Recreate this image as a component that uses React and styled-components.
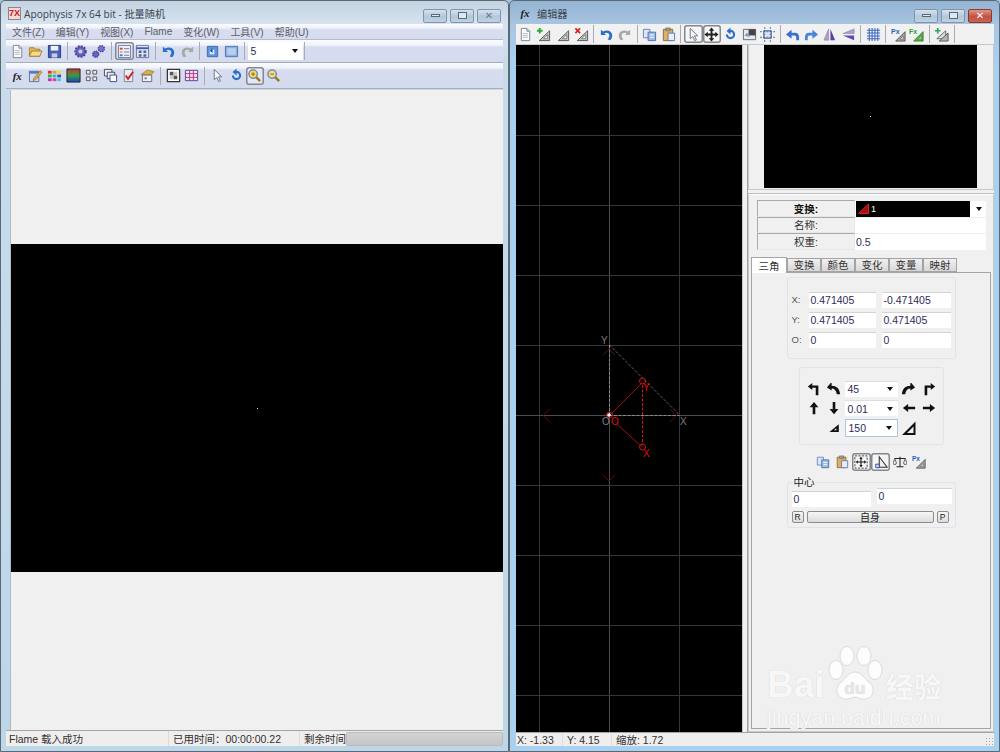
import React from 'react'
import styled, { createGlobalStyle } from 'styled-components'

const Global = createGlobalStyle`
	html, body { margin: 0; padding: 0; background: #9fc4e4; }
	body { font-family: "Liberation Sans", "Noto Sans CJK SC", sans-serif; font-size: 10.5px; color: #222; }
`

const Desktop = styled.div`
	position: relative;
	width: 1000px;
	height: 752px;
	overflow: hidden;
	background: #9fc4e4;
`
const Window = styled.div`
	position: absolute;
	top: 0;
	left: ${p => p.$left}px;
	width: ${p => p.$width}px;
	height: 752px;
	box-sizing: border-box;
	display: flex;
	flex-direction: column;
	padding: 0 ${p => p.$padR}px 5px ${p => p.$padL}px;
	border: 1px solid #5d6871;
	border-radius: 5px 5px 0 0;
	background: ${p => p.$active
		? 'linear-gradient(180deg, #94b4d4 0, #a9c5e0 24px, #a8d0f0 60px, #a8d0f0 100%)'
		: 'linear-gradient(180deg, #c4d3e2 0, #d7e4f0 24px, #c8dcec 60px, #bcd6ea 100%)'};
`
const TitleBar = styled.div`
	height: 23px;
	flex: none;
	display: flex;
	align-items: center;
	gap: 3px;
	font-family: "Open Sans", "Noto Sans CJK SC", sans-serif;
	font-size: 10.2px;
	color: #3a444e;
`
const TitleText = styled.span`
	flex: 1;
	margin-top: 2px;
`
const AppLogo = styled.span`
	width: 13px;
	height: 13px;
	margin: 2px 0 0 2px;
	box-sizing: border-box;
	border: 1px solid #888;
	background: #f6d7d7;
	color: #c02020;
	font: bold 9px/11px "Liberation Sans", sans-serif;
	text-align: center;
	overflow: hidden;
`
const FxMark = styled.span`
	font: italic bold 11px/14px "Liberation Serif", serif;
	color: #222;
	width: 18px;
	text-align: center;
`
const Caps = styled.div`
	display: flex;
	gap: 3px;
	margin-right: 2px;
	margin-top: 6px;
`
const Cap = styled.div`
	width: 24px;
	height: 14px;
	box-sizing: border-box;
	display: flex;
	align-items: center;
	justify-content: center;
	border: 1px solid ${p => p.$red ? '#8a3a30' : '#8294a6'};
	border-radius: 2px;
	background: ${p => p.$red
		? 'linear-gradient(180deg, #e0968a, #c4503f 55%, #c86454)'
		: 'linear-gradient(180deg, #d4e2ee, #b4c8dc 55%, #bfd2e4)'};
`
const CapGlyph = styled.span`
	display: block;
	box-sizing: border-box;
	width: ${p => p.$w}px;
	height: ${p => p.$h}px;
	border: 1px solid #5b6875;
	background: #dfe7ef;
`
const CloseGlyph = styled.span`
	color: ${p => p.$red ? '#fff' : '#6b7a88'};
	font: bold 10px/12px "Liberation Sans", "DejaVu Sans", sans-serif;
`

const MenuBar = styled.div`
	height: 15px;
	flex: none;
	display: flex;
	gap: 11px;
	padding-left: 6px;
	align-items: center;
	color: #5c6068;
	font-size: 10px;
	background: linear-gradient(180deg, #fbfcff 0, #eef1fa 4px, #d7ddef 6px, #d7ddef 100%);
	border-bottom: 1px solid #b8bcc8;
`
const ToolBar = styled.div`
	flex: none;
	display: flex;
	align-items: center;
	height: ${p => p.$h}px;
	padding-left: ${p => p.$pl}px;
	box-sizing: border-box;
	background: ${p => p.$plain ? '#f1f1f1' : 'linear-gradient(180deg, #fbfcff 0, #f1f3fb 5px, #d7ddef 7px, #d5dbee 100%)'};
	border-bottom: 1px solid ${p => p.$plain ? '#c8c8c8' : '#a9adb5'};
`
const ToolBtn = styled.div`
	flex: none;
	width: 18.6px;
	height: 18px;
	box-sizing: border-box;
	display: flex;
	align-items: center;
	justify-content: center;
	border-radius: 3px;
	${p => p.$active && 'box-shadow: inset 0 0 0 1.5px #83878e; background: rgba(255,255,255,.35);'}
`
const Sep = styled.div`
	flex: none;
	width: ${p => p.$w}px;
	height: 18px;
	display: flex;
	justify-content: center;
	&::before { content: ''; width: 1px; background: #a8abb3; }
`
const ComboBox = styled.div`
	width: ${p => p.$w}px;
	height: ${p => p.$h}px;
	box-sizing: border-box;
	flex: none;
	display: flex;
	align-items: center;
	justify-content: space-between;
	padding: 0 5px 0 3px;
	background: #fff;
	color: #2c2c58;
	font-size: 10.5px;
	${p => p.$focus && 'border: 1px solid #a8c8e4;'}
	${p => p.$flat || p.$focus ? '' : 'border-top: 1px solid #ddd;'}
	&::after {
		content: '';
		border: 3px solid transparent;
		border-top: 4px solid #111;
		border-bottom: 0;
	}
`

const MainPane = styled.div`
	flex: 1;
	margin: 1px 0 0 4px;
	padding-bottom: 4px;
	background: #f0f0f0;
	border-left: 1px solid #b8b8b8;
	display: flex;
	align-items: center;
	min-height: 0;
`
const RenderArea = styled.div`
	flex: 1;
	height: ${p => p.$h}px;
	background: #000;
	display: flex;
	align-items: center;
	justify-content: center;
`
const Speck = styled.i`
	display: block;
	width: 1px;
	height: 1px;
	background: #ddd;
`
const StatusBar = styled.div`
	flex: none;
	height: ${p => p.$h}px;
	display: flex;
	align-items: center;
	position: relative;
	background: #f0eeed;
	border-top: 1px solid #a4a4a4;
	font-size: 10.5px;
	color: #303030;
`
const StatusCell = styled.div`
	flex: none;
	box-sizing: border-box;
	width: ${p => p.$w}px;
	padding-left: ${p => p.$pl || 4}px;
	border-right: ${p => p.$last ? 'none' : '1px solid #dcdcdc'};
	white-space: nowrap;
`
const Progress = styled.div`
	flex: 1;
	height: 14px;
	background: linear-gradient(180deg, #d4d4d4, #c4c4c4);
	border-radius: 2px;
	box-shadow: inset 0 0 0 1px #bbb;
`
const Grip = styled.span`
	position: absolute;
	right: 1px;
	bottom: 1px;
	width: 8px;
	height: 8px;
	background: radial-gradient(circle, #aaa 0.8px, transparent 1px) 0 0 / 3px 3px;
`

const EditorBody = styled.div`
	flex: 1;
	display: flex;
	min-height: 0;
`
const Stage = styled.svg`
	flex: none;
	display: block;
	width: 226px;
	height: 689px;
	background: #000;
`
const Splitter = styled.div`
	flex: none;
	width: 6px;
	background: #f0f0f0;
	border-left: 1px solid #c8c8c8;
	border-right: 1px solid #a0a0a0;
	box-sizing: border-box;
`
const SideColumn = styled.div`
	flex: 1;
	display: flex;
	flex-direction: column;
	gap: 4px;
	min-width: 0;
	background: #f0f0f0;
`
const PreviewPane = styled.div`
	flex: none;
	height: 144px;
	display: flex;
	justify-content: center;
	padding-right: 1px;
	background: #f0f0f0;
	border: 1px solid #c8c8c8;
	border-top: 0;
`
const PreviewArea = styled.div`
	width: 213px;
	height: 143px;
	background: #000;
	display: flex;
	align-items: center;
	justify-content: center;
`
const ControlPane = styled.div`
	flex: 1;
	display: flex;
	flex-direction: column;
	box-sizing: border-box;
	padding: 5px 1px 2px 2px;
	background: #f0f0f0;
	border: 1px solid #c8c8c8;
	border-top: 1px solid #fff;
	box-shadow: 0 -1px 0 #bdbdbd;
	min-height: 0;
`
const PropTable = styled.div`
	width: 229px;
	margin-left: 6px;
	display: grid;
	grid-template-columns: 98px 131px;
	grid-auto-rows: 16.6px;
	font-size: 10.5px;
`
const PropLabel = styled.div`
	display: flex;
	align-items: center;
	justify-content: center;
	border: 1px solid #a9a9a9;
	border-right-color: #e8e8e8;
	border-bottom-color: #e8e8e8;
	box-sizing: border-box;
	color: ${p => p.$bold ? '#111' : '#333'};
	font-weight: ${p => p.$bold ? 'bold' : 'normal'};
`
const PropValue = styled.div`
	display: flex;
	align-items: center;
	gap: 2px;
	background: #fff;
	padding-left: 1px;
	color: #2c2c58;
	border-top: 1px solid #eee;
`
const XformSelect = styled.div`
	flex: 1;
	align-self: stretch;
	display: flex;
	align-items: center;
	gap: 2px;
	background: #000;
	color: #fff;
	font-size: 9px;
	padding-left: 2px;
`
const SelectArrow = styled.span`
	width: 14px;
	display: flex;
	justify-content: center;
	&::after {
		content: '';
		border: 3px solid transparent;
		border-top: 4px solid #111;
		border-bottom: 0;
	}
`
const TabStrip = styled.div`
	display: flex;
	align-items: flex-end;
	margin-top: 6px;
	height: 16px;
	flex: none;
`
const Tab = styled.div`
	box-sizing: border-box;
	width: ${p => p.$active ? 36 : 34}px;
	height: ${p => p.$active ? 16 : 14}px;
	display: flex;
	align-items: center;
	justify-content: center;
	font-size: 10.5px;
	color: #333;
	background: ${p => p.$active ? '#fff' : 'linear-gradient(180deg, #f0f0f0, #d8d8d8)'};
	border: 1px solid #a4a4a4;
	border-bottom: ${p => p.$active ? '0' : '1px solid #a4a4a4'};
	margin-bottom: ${p => p.$active ? '-1px' : '0'};
	position: relative;
	z-index: ${p => p.$active ? 1 : 0};
`
const TabBody = styled.div`
	flex: 1;
	width: 240px;
	box-sizing: border-box;
	border: 1px solid #a4a4a4;
	display: flex;
	flex-direction: column;
	align-items: center;
	padding-top: 4px;
`
const GroupBox = styled.div`
	width: ${p => p.$w}px;
	height: ${p => p.$h}px;
	box-sizing: border-box;
	flex: none;
	position: relative;
	margin-top: ${p => p.$mt || 0}px;
	border: 1px solid #e0e4e8;
	border-radius: 3px;
	background: #f0f0f0;
`
const CoordGrid = styled.div`
	display: grid;
	grid-template-columns: 17px 67px 75px;
	row-gap: 4px;
	grid-auto-rows: 16px;
	padding: 14px 0 0 4px;
	align-items: center;
`
const AxisLabel = styled.span`
	color: #555;
	font-size: 9.5px;
`
const NumInput = styled.div`
	width: ${p => p.$w || 67}px;
	height: 16px;
	box-sizing: border-box;
	padding: 1px 0 0 2px;
	margin-left: ${p => p.$ml || 0}px;
	margin-top: ${p => p.$mt || 0}px;
	background: #fff;
	border-top: 1px solid #d4d4d4;
	color: #2c2c58;
	font-size: 10.5px;
	line-height: 13px;
	flex: none;
`
const NudgeGrid = styled.div`
	display: grid;
	grid-template-columns: 19px 20px 55px 20px 20px;
	grid-auto-rows: 16px;
	row-gap: 3.5px;
	padding: 13px 0 0 5px;
	align-items: center;
	justify-items: center;
`
const IconSlot = styled.div`
	grid-column: ${p => p.$col};
	display: flex;
`
const IconRow = styled.div`
	display: flex;
	justify-content: center;
	gap: 0.8px;
	margin-top: 8px;
	flex: none;
`
const Legend = styled.span`
	position: absolute;
	top: -7px;
	left: 5px;
	padding: 0 1px;
	background: #f0f0f0;
	font-size: 10.5px;
	line-height: 13px;
	color: #222;
`
const CenterInputs = styled.div`
	display: flex;
	align-items: flex-start;
	padding: 5px 0 0 4px;
`
const CenterButtons = styled.div`
	display: flex;
	gap: 3px;
	padding: 4px 0 0 4px;
`
const MiniBtn = styled.div`
	width: ${p => p.$w}px;
	height: 12px;
	box-sizing: border-box;
	display: flex;
	align-items: center;
	justify-content: center;
	border: 1px solid #8c8c8c;
	border-radius: 2px;
	background: linear-gradient(180deg, #f6f6f6, #dcdcdc);
	font-size: ${p => p.$small ? 8.5 : 10}px;
	color: #222;
`

const Watermark = styled.div`
	position: absolute;
	left: 767px;
	top: 645px;
	width: 184px;
	color: rgba(255,255,255,.9);
	text-shadow: 0 0 1px #c4c4c4;
	pointer-events: none;
`
const LogoRow = styled.div`
	display: flex;
	align-items: flex-end;
	height: 60px;
`
const BaiWord = styled.span`
	font: bold 37px/40px "Liberation Sans", sans-serif;
	margin-right: 1px;
`
const JingWord = styled.span`
	font: bold 28px/38px "Noto Sans CJK SC", sans-serif;
	margin-left: 2px;
`
const Domain = styled.div`
	font: 21.5px/24px "Liberation Sans", sans-serif;
	margin-top: 1px;
	white-space: nowrap;
`

/* toolbar drawings, all on a 16 box */
const tri = <><path d="M14.5 14.5H3.5L14.5 4z" fill="#c9c9c9" stroke="#555" /><path d="M12.5 12.5H8L12.5 8z" fill="#f1f1f1" stroke="#555" strokeWidth=".7" /></>
const arrow = (d, fill = '#111') => <path d={d} fill={fill} />
const drawings = {
	doc: <><path d="M3.5 1.5h6l3 3v10h-9z" fill="#fafafa" stroke="#7c8490" /><path d="M9.5 1.5v3h3" fill="#cfd6e2" stroke="#7c8490" /><path d="M5 7h5.5M5 9h5.5M5 11h5.5" stroke="#b4bac6" /></>,
	open: <><path d="M1.5 13V4h5l1 1.5h5V13z" fill="#e8b84c" stroke="#a8812e" /><path d="M1.5 13l2.5-5.5h11L12.5 13z" fill="#f7d98a" stroke="#a8812e" /></>,
	save: <><path d="M1.5 1.5h13v13h-13z" fill="#4a5fb8" stroke="#2c3a80" /><path d="M4 2h8v5H4z" fill="#eef0fa" /><path d="M5 10h6v4.5H5z" fill="#c6cbe0" /></>,
	gear: <><circle cx="8" cy="8" r="5.5" fill="#6a62c0" stroke="#4a4496" strokeWidth="2.4" strokeDasharray="2 1.2" /><circle cx="8" cy="8" r="2.2" fill="#cfcdf0" /></>,
	gears: <><circle cx="5" cy="11" r="3.2" fill="#6a62c0" stroke="#4a4496" strokeWidth="1.6" strokeDasharray="1.5 1" /><circle cx="11" cy="5" r="3.2" fill="#7a72cc" stroke="#4a4496" strokeWidth="1.6" strokeDasharray="1.5 1" /></>,
	list: <><path d="M1.5 1.5h13v13h-13z" fill="#eef0fa" stroke="#6674a8" /><path d="M3 4h3v2H3z" fill="#d04040" /><path d="M3 7.5h3v2H3z" fill="#e8b040" /><path d="M3 11h3v2H3z" fill="#4080c8" /><path d="M7.5 5h5.5M7.5 8.5h5.5M7.5 12h5.5" stroke="#707a98" /></>,
	thumbs: <><path d="M1.5 1.5h13v13h-13z" fill="#dfe4f6" stroke="#6674a8" /><path d="M1.5 4.5h13" stroke="#3c5cb0" strokeWidth="2" /><path d="M4 7h3v2.5H4zM9 7h3v2.5H9zM4 11h3v2.5H4zM9 11h3v2.5H9z" fill="#5a6688" /></>,
	undo: <path d="M2 3v5.5h5.5L5.6 6.6C7.5 5.4 10.5 6 11 8.4c.3 1.8-.7 3.4-2 4.6l3 1c2-1.8 2.7-4.4 1.8-6.7C12.5 3.6 8 2.7 4.4 4.9z" fill="#2c6ec8" />,
	redo: <path d="M14 3v5.500H8.500l1.900-1.900C8.500 5.400 5.500 6 5 8.400c-.3 1.800.7 3.400 2 4.600l-3 1C2 12.200 1.300 9.600 2.200 7.300 3.500 3.600 8 2.700 11.600 4.900z" fill="#a8a8a8" />,
	winBack: <><path d="M2.500 2.500h11v11h-11z" fill="#5c94dc" stroke="#3c68b0" /><path d="M5 6h5v5H5z" fill="#dce8f8" /><path d="M8 4.500L5 7l3 2.500z" fill="#1c4c9c" /></>,
	winFull: <><path d="M1.500 2.500h13v11h-13z" fill="#8cb0e4" stroke="#4c70b0" /><path d="M3.500 4.500h9v7h-9z" fill="#b8d0f0" /></>,
	note: <><path d="M1.500 3.500h10v11h-10z" fill="#d0dcf4" stroke="#5870a8" /><path d="M1.500 3.500h10v2.500h-10z" fill="#4c78c8" /><path d="M6 11l7-8 2 1.500-7 8-2.500 1z" fill="#e4a848" stroke="#8c5c20" strokeWidth=".6" /></>,
	palette: <><path d="M1 3h4v3H1z" fill="#e03030" /><path d="M6 3h4v3H6z" fill="#e8a020" /><path d="M11 3h4v3h-4z" fill="#e8e020" /><path d="M1 7h4v3H1z" fill="#30b040" /><path d="M6 7h4v3H6z" fill="#20c0d8" /><path d="M11 7h4v3h-4z" fill="#3050d0" /><path d="M1 11h4v3H1z" fill="#c030c0" /><path d="M6 11h4v3H6z" fill="#e04090" /><path d="M11 11h4v3h-4z" fill="#40d0e0" /></>,
	gradient: <><defs><linearGradient id="gr" x1="0" y1="0" x2="0" y2="1"><stop offset="0" stopColor="#d03030" /><stop offset=".5" stopColor="#30a040" /><stop offset="1" stopColor="#2040c0" /></linearGradient></defs><path d="M1 1h14v14H1z" fill="url(#gr)" stroke="#222" /></>,
	quad: <><path d="M2.500 2.500h4v4h-4zM9.500 2.500h4v4h-4zM2.500 9.500h4v4h-4zM9.500 9.500h4v4h-4z" fill="#e4e8f4" stroke="#555" /></>,
	stack: <><path d="M1.500 1.500h8v7h-8z" fill="#f4f6fc" stroke="#445" /><path d="M4.500 4.500h8v7h-8z" fill="#e4eaf8" stroke="#445" /><path d="M7.500 7.500h7v7h-7z" fill="#fff" stroke="#2c4c9c" /></>,
	check: <><path d="M3.500 1.500h9v13h-9z" fill="#e8ecf6" stroke="#7c8490" /><path d="M5 8l2.500 3.500L13 4" fill="none" stroke="#d02020" strokeWidth="2" /></>,
	hat: <><path d="M2.500 7.500h10v7h-10z" fill="#eceff8" stroke="#667" /><path d="M1 7l7-5 7 2-3 3z" fill="#d8b040" stroke="#806820" strokeWidth=".6" /><path d="M5 10h2v2H5z" fill="#667" /></>,
	box: <><path d="M1.500 1.500h13v13h-13z" fill="#fff" stroke="#333" strokeWidth="1.400" /><path d="M4 4h4v4H4zM8 8h4v4H8z" fill="#555" /><path d="M8 4h4v4H8zM4 8h4v4H4z" fill="#ccc" /></>,
	frame: <><path d="M1.500 2.500h13v11h-13z" fill="#f0e4f0" stroke="#5040a0" /><path d="M1.500 6h13M1.500 10h13M6 2.500v11M10 2.500v11" stroke="#c03080" /></>,
	cursor: <path d="M4.500 1.500v11l2.800-2.400 2 4.400 1.800-.8-2-4.300h3.400z" fill="#f4f6fa" stroke="#6a7280" />,
	rotate: <path d="M8 3a5 5 0 1 1-5 5h2.300A2.700 2.700 0 1 0 8 5.300V8L3.800 4.200 8 .5z" fill="#2c6ec8" />,
	zoomIn: <><path d="M9.500 9.500l4.500 4.500" stroke="#a07818" strokeWidth="2.600" /><circle cx="6.500" cy="6.500" r="4.500" fill="#f4d868" stroke="#6e80a8" strokeWidth="1.400" /><path d="M4.500 6.500h4M6.500 4.500v4" stroke="#8c6c10" /></>,
	zoomOut: <><path d="M9.500 9.500l4.500 4.500" stroke="#a07818" strokeWidth="2.600" /><circle cx="6.500" cy="6.500" r="4.500" fill="#f0dc88" stroke="#6e80a8" strokeWidth="1.400" /><path d="M4.500 6.500h4" stroke="#8c6c10" /></>,
	triAdd: <>{tri}<path d="M4 1v6M1 4h6" stroke="#30a830" strokeWidth="2" /></>,
	triPlain: <>{tri}</>,
	triDel: <>{tri}<path d="M1.500 1.500l5 5M6.500 1.500l-5 5" stroke="#d82020" strokeWidth="1.800" /></>,
	copy: <><path d="M1.500 2.500h7v9h-7z" fill="#dce6f8" stroke="#6a84b8" /><path d="M6.500 5.500h8v9h-8z" fill="#9cbce8" stroke="#4a70b0" /><path d="M8.500 8.500h4M8.500 11h4" stroke="#fff" /></>,
	paste: <><path d="M2.500 2.500h10v12h-10z" fill="#e0b060" stroke="#8c6c30" /><path d="M5 1h5v3H5z" fill="#999" stroke="#666" strokeWidth=".6" /><path d="M7.500 6.500h7v8h-7z" fill="#e8eef8" stroke="#5a78b0" /></>,
	move: <path d="M8 .5L11 4H9v3h3V5l3.500 3L12 11V9H9v3h2l-3 3.500L5 12h2V9H4v2L.5 8 4 5v2h3V4H5z" fill="#222" />,
	fit: <><path d="M1.500 2.500h13v11h-13z" fill="#e4e8f0" stroke="#667" /><path d="M7 2.500h7.500V9H7z" fill="#444" /><path d="M2.500 9l3-3 3 5z" fill="#8898b8" /></>,
	cross: <><path d="M4 4h8v8H4z" fill="#dce4f4" stroke="#3c5c9c" /><path d="M5 0v16M11 0v16M0 5h16M0 11h16" stroke="#3c5c9c" strokeDasharray="2 1.500" strokeWidth=".9" /></>,
	left: arrow('M1 8l6-5v3h4c2.500 0 4 1.800 4 5v3h-3v-2.500c0-1.600-.7-2.500-2-2.500H7v3.500z', '#3a70d0'),
	right: arrow('M15 8L9 3v3H5c-2.500 0-4 1.800-4 5v3h3v-2.500C4 9.900 4.700 9 6 9h3v3.500z', '#4a84dc'),
	flipH: <><path d="M7 2L2 14h5z" fill="#a8a0c8" stroke="#7870a0" strokeWidth=".5" /><path d="M9 2l5 12H9z" fill="#5840a8" /></>,
	flipV: <><path d="M14 2L2 7h12z" fill="#a8a0c8" stroke="#7870a0" strokeWidth=".5" /><path d="M14 14L2 9h12z" fill="#6848b0" /></>,
	grid: <path d="M1 3.500h14M1 6.500h14M1 9.500h14M1 12.500h14M3.500 1v14M6.500 1v14M9.500 1v14M12.500 1v14" stroke="#3c68c0" strokeWidth="1.100" />,
	triP: <><path d="M15 15H5L15 5z" fill="#a8a8a8" stroke="#555" /><path d="M13 13H9.500L13 9.500z" fill="#eee" stroke="#555" strokeWidth=".6" /><text x="0" y="7" fontSize="7.500" fontWeight="bold" fill="#3060c0" fontFamily="Liberation Sans">Px</text></>,
	triF: <><path d="M15 15H5L15 5z" fill="#58b040" stroke="#3c7c30" /><path d="M13 13H9.500L13 9.500z" fill="#d8f0c8" stroke="#3c7c30" strokeWidth=".6" /><text x="0" y="7" fontSize="7.500" fontWeight="bold" fill="#30a040" fontFamily="Liberation Sans">Fx</text></>,
	triCopy: <><path d="M12.500 12.500H3L12.500 4z" fill="#ddd" stroke="#666" /><path d="M15 15H5.500L15 6.500z" fill="#b4b4b4" stroke="#555" /><path d="M4 1v6M1 4h6" stroke="#30a860" strokeWidth="1.800" /></>,
	rotL90: arrow('M6 1L1 5l5 4V6.500h4V15h3V4H6z'),
	rotL: arrow('M5 2L1 7l5 3V8c3 0 5 2 5.500 6H15c-.5-6-4-9-9-9V2z'),
	rotR: arrow('M11 2l4 5-5 3V8c-3 0-5 2-5.500 6H1c.5-6 4-9 9-9V2z'),
	rotR90: arrow('M10 1l5 4-5 4V6.500H6V15H3V4h7z'),
	up: arrow('M8 1l5 6H9.500v8h-3V7H3z'),
	down: arrow('M8 15l5-6H9.500V1h-3v8H3z'),
	back: arrow('M1 8l6-4.500V6.500h8v3H7v3z'),
	forward: arrow('M15 8L9 3.500V6.500H1v3h8v3z'),
	small: <path d="M14.500 13.500H3L14.500 4zM11.500 11.500H8.500l3-2.500z" fill="#111" fillRule="evenodd" />,
	big: <path d="M14.500 15H1L14.500 1.500zM12.500 13H6L12.500 6.500z" fill="#111" fillRule="evenodd" />,
	pivot: <><path d="M1 1h14v14H1z" fill="none" stroke="#333" strokeDasharray="2.500 1.500" /><path d="M8 3v10M3 8h10" stroke="#222" strokeWidth="1.300" /><path d="M8 2l2 2.500H6zM8 14l2-2.500H6zM2 8l2.500-2v4zM14 8l-2.500-2v4z" fill="#222" /></>,
	triMark: <><path d="M6 2L15 14H6z" fill="#eee" stroke="#333" strokeWidth="1.200" /><path d="M2 10.500h4v4H2z" fill="#d8dcf4" stroke="#2c3c9c" /></>,
	scale: <><path d="M8 2v11M4 13.500h8M2 4h12" stroke="#222" strokeWidth="1.200" /><path d="M0 9l2-5 2 5a2 2 0 0 1-4 0zM12 9l2-5 2 5a2 2 0 0 1-4 0z" fill="#ddd" stroke="#222" strokeWidth=".7" /></>,
}

const Icon = ({ name, size = 15 }) => (
	<svg width={size} height={size} viewBox="0 0 16 16" aria-hidden="true">{drawings[name]}</svg>
)

const renderTools = (list, sepWidth) => list.map((t, i) => {
	if (t === '|') return <Sep key={i} $w={sepWidth} />
	if (t === 'fx') return <ToolBtn key={i}><FxMark>fx</FxMark></ToolBtn>
	const active = t.endsWith('*')
	return <ToolBtn key={i} $active={active}><Icon name={active ? t.slice(0, -1) : t} /></ToolBtn>
})

const topTools = ['doc', 'open', 'save', '|', 'gear', 'gears', '|', 'list*', 'thumbs', '|', 'undo', 'redo', '|', 'winBack', 'winFull', '|']
const lowerTools = ['fx', 'note', 'palette', 'gradient', 'quad', 'stack', 'check', 'hat', '|', 'box', 'frame', '|', 'cursor', 'rotate', 'zoomIn*', 'zoomOut']
const editorTools = ['doc', 'triAdd', 'triPlain', 'triDel', '|', 'undo', 'redo', '|', 'copy', 'paste', '|', 'cursor*', 'move*', 'rotate', 'fit', 'cross', '|', 'left', 'right', 'flipH', 'flipV', '|', 'grid', '|', 'triP', 'triF', '|', 'triCopy', '|']
const menus = ['文件(Z)', '编辑(Y)', '视图(X)', 'Flame', '变化(W)', '工具(V)', '帮助(U)']
const tabs = ['三角', '变换', '颜色', '变化', '变量', '映射']

const gridX = [540, 610, 680]
const gridY = [65, 135, 205, 275, 345, 415, 485, 555, 625, 695]

function EditorStage() {
	return (
		<Stage viewBox="516 45 226 689">
			{gridX.map(x => <line key={x} x1={x - 0.5} x2={x - 0.5} y1="45" y2="734" stroke={x === 610 ? '#4c4c4c' : '#363636'} />)}
			{gridY.map(y => <line key={y} y1={y + 0.5} y2={y + 0.5} x1="516" x2="743" stroke={y === 415 ? '#4c4c4c' : '#363636'} />)}
			<g stroke="#5a0e0e" fill="none" strokeWidth="1">
				<path d="M603 355l6-6 6 6M550 409l-7 6.500 7 6.500M670 409l6.500 6.500-6.500 6.500M603 475l6 6 6-6" />
			</g>
			<g stroke="#8a8a8a" fill="none">
				<path d="M609.500 345v70" strokeDasharray="3 1.500" />
				<path d="M609.500 415.500h70" strokeDasharray="3 1.500" />
				<path d="M609.500 345l70 70" strokeDasharray="3 1.500" strokeWidth=".7" />
			</g>
			<g stroke="#a81010" fill="none">
				<path d="M609.500 415.500l33-33" />
				<path d="M617 424l25 23" />
				<path d="M642.500 385v60" strokeDasharray="3 1.500" stroke="#d81010" />
				<circle cx="642.500" cy="381" r="3" stroke="#d81010" />
				<circle cx="642.500" cy="447" r="3" stroke="#d81010" />
				<circle cx="609.500" cy="415" r="3" stroke="#d81010" />
			</g>
			<circle cx="609" cy="415" r="1.800" fill="#fff" />
			<g fontFamily="Liberation Sans" fontSize="10">
				<text x="601" y="344" fill="#7c7c7c">Y</text>
				<text x="602" y="425" fill="#7c8490">O</text>
				<text x="680" y="425" fill="#7c7c7c">X</text>
				<text x="611" y="425" fill="#e01010">O</text>
				<text x="643" y="391" fill="#e01010">Y</text>
				<text x="643" y="457" fill="#e01010">X</text>
			</g>
		</Stage>
	)
}

function BaiduMark() {
	return (
		<Watermark>
			<LogoRow>
				<BaiWord>Bai</BaiWord>
				<svg width="58" height="60" viewBox="0 0 58 60" aria-hidden="true">
					<g fill="#fff" stroke="#d0d0d0" strokeWidth=".8" opacity=".92">
						<ellipse cx="10" cy="25" rx="7" ry="9.500" />
						<ellipse cx="21" cy="11" rx="7" ry="9.500" />
						<ellipse cx="38" cy="11" rx="7" ry="9.500" />
						<ellipse cx="49" cy="25" rx="7" ry="9.500" />
						<path d="M29 27c7 0 9 7 15 11 6 5 3 17-7 16-4 0-5-2-8-2s-4 2-8 2C11 55 8 43 14 38c6-4 8-11 15-11z" />
					</g>
					<text x="29" y="49" textAnchor="middle" fontFamily="Liberation Sans" fontWeight="bold" fontSize="17" fill="#e8e8e8">du</text>
				</svg>
				<JingWord>经验</JingWord>
			</LogoRow>
			<Domain>jingyan.baidu.com</Domain>
		</Watermark>
	)
}

export default function App() {
	return (
		<Desktop>
			<Global />
			<Window $left={0} $width={509} $padL={5} $padR={5}>
				<TitleBar>
					<AppLogo>7X</AppLogo>
					<TitleText>Apophysis 7x 64 bit - 批量随机</TitleText>
					<Caps>
						<Cap><CapGlyph $w={9} $h={3} /></Cap>
						<Cap><CapGlyph $w={9} $h={7} /></Cap>
						<Cap><CloseGlyph>✕</CloseGlyph></Cap>
					</Caps>
				</TitleBar>
				<MenuBar>{menus.map(m => <span key={m}>{m}</span>)}</MenuBar>
				<ToolBar $h={23} $pl={2}>
					{renderTools(topTools, 7)}
					<ComboBox $w={55} $h={18} $flat>5</ComboBox>
					<Sep $w={4} />
				</ToolBar>
				<ToolBar $h={26} $pl={2}>{renderTools(lowerTools, 7.2)}</ToolBar>
				<MainPane>
					<RenderArea $h={328}><Speck /></RenderArea>
				</MainPane>
				<StatusBar $h={15}>
					<StatusCell $w={163} $pl={3}>Flame 载入成功</StatusCell>
					<StatusCell $w={131}>已用时间：00:00:00.22</StatusCell>
					<StatusCell $w={46} $last>剩余时间</StatusCell>
					<Progress />
				</StatusBar>
			</Window>

			<Window $left={509} $width={491} $padL={6} $padR={5} $active>
				<TitleBar>
					<FxMark>fx</FxMark>
					<TitleText>编辑器</TitleText>
					<Caps>
						<Cap><CapGlyph $w={9} $h={3} /></Cap>
						<Cap><CapGlyph $w={9} $h={7} /></Cap>
						<Cap $red><CloseGlyph $red>✕</CloseGlyph></Cap>
					</Caps>
				</TitleBar>
				<ToolBar $h={21} $pl={0} $plain>{renderTools(editorTools, 6.4)}</ToolBar>
				<EditorBody>
					<EditorStage />
					<Splitter />
					<SideColumn>
						<PreviewPane>
							<PreviewArea><Speck /></PreviewArea>
						</PreviewPane>
						<ControlPane>
							<PropTable>
								<PropLabel $bold>变换:</PropLabel>
								<PropValue>
									<XformSelect>
										<svg width="11" height="11" viewBox="0 0 11 11" aria-hidden="true"><path d="M10.500 10.500H.5L10.500 1z" fill="#a01010" stroke="#e02020" /></svg>
										1
									</XformSelect>
									<SelectArrow />
								</PropValue>
								<PropLabel>名称:</PropLabel>
								<PropValue />
								<PropLabel>权重:</PropLabel>
								<PropValue>0.5</PropValue>
							</PropTable>
							<TabStrip>
								{tabs.map((t, i) => <Tab key={t} $active={i === 0}>{t}</Tab>)}
							</TabStrip>
							<TabBody>
								<GroupBox $w={169} $h={82}>
									<CoordGrid>
										<AxisLabel>X:</AxisLabel><NumInput>0.471405</NumInput><NumInput $ml={6} $w={69}>-0.471405</NumInput>
										<AxisLabel>Y:</AxisLabel><NumInput>0.471405</NumInput><NumInput $ml={6} $w={69}>0.471405</NumInput>
										<AxisLabel>O:</AxisLabel><NumInput>0</NumInput><NumInput $ml={6} $w={69}>0</NumInput>
									</CoordGrid>
								</GroupBox>
								<GroupBox $w={145} $h={78} $mt={8}>
									<NudgeGrid>
										<Icon name="rotL90" size={14} />
										<Icon name="rotL" size={15} />
										<ComboBox $w={53} $h={16}>45</ComboBox>
										<Icon name="rotR" size={15} />
										<Icon name="rotR90" size={14} />
										<Icon name="up" size={14} />
										<Icon name="down" size={14} />
										<ComboBox $w={53} $h={16}>0.01</ComboBox>
										<Icon name="back" size={14} />
										<Icon name="forward" size={14} />
										<IconSlot $col={2}><Icon name="small" size={13} /></IconSlot>
										<ComboBox $w={53} $h={18} $focus>150</ComboBox>
										<Icon name="big" size={16} />
									</NudgeGrid>
								</GroupBox>
								<IconRow>
									{['copy', 'paste', 'pivot*', 'triMark*', 'scale', 'triP'].map(n => {
										const active = n.endsWith('*')
										return <ToolBtn key={n} $active={active}><Icon name={active ? n.slice(0, -1) : n} size={14} /></ToolBtn>
									})}
								</IconRow>
								<GroupBox $w={169} $h={46} $mt={11}>
									<Legend>中心</Legend>
									<CenterInputs>
										<NumInput $w={79} $mt={3}>0</NumInput>
										<NumInput $w={75} $ml={6}>0</NumInput>
									</CenterInputs>
									<CenterButtons>
										<MiniBtn $w={12} $small>R</MiniBtn>
										<MiniBtn $w={127}>自身</MiniBtn>
										<MiniBtn $w={12} $small>P</MiniBtn>
									</CenterButtons>
								</GroupBox>
							</TabBody>
						</ControlPane>
					</SideColumn>
				</EditorBody>
				<StatusBar $h={13}>
					<StatusCell $w={47} $pl={1}>X: -1.33</StatusCell>
					<StatusCell $w={49}>Y: 4.15</StatusCell>
					<StatusCell $w={100} $last>缩放: 1.72</StatusCell>
					<Grip />
				</StatusBar>
			</Window>
			<BaiduMark />
		</Desktop>
	)
}
